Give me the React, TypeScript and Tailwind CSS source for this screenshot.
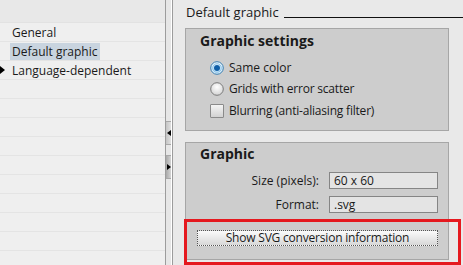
import React from "react";

const font = { fontFamily: '"Open Sans", "Noto Sans", sans-serif' };

function Radio({ checked }: { checked?: boolean }) {
  return (
    <svg width="14" height="14" viewBox="0 0 14 14" className="shrink-0">
      <defs>
        <radialGradient id={checked ? "rg1" : "rg0"} cx="50%" cy="35%" r="60%">
          <stop offset="0%" stopColor="#ffffff" />
          <stop offset="100%" stopColor={checked ? "#cfe6f5" : "#d6d6d6"} />
        </radialGradient>
      </defs>
      <circle cx="7" cy="7" r="6.3" fill={`url(#${checked ? "rg1" : "rg0"})`} stroke={checked ? "#3c7fb1" : "#7a7a7a"} strokeWidth="1" />
      {checked && <circle cx="7" cy="7" r="3" fill="#0f5fa8" />}
      {checked && <circle cx="7" cy="7" r="4.2" fill="none" stroke="#5fb0e6" strokeWidth="0.8" />}
    </svg>
  );
}

function Checkbox() {
  return (
    <div className="w-[14px] h-[14px] shrink-0 border border-[#8a8a8a] rounded-[1px] bg-gradient-to-b from-[#f4f4f4] to-[#d2d2d2]" />
  );
}

export default function App() {
  const rows = ["General", "Default graphic", "Language-dependent", "", "", "", "", "", "", "", "", "", ""];
  return (
    <div className="relative w-[463px] h-[265px] flex overflow-hidden text-[12px] text-[#1a1a1a]" style={font}>
      {/* Left tree */}
      <div className="w-[165px] shrink-0 bg-[#efefef] flex flex-col">
        <div className="h-[23px] shrink-0 bg-[#e8e8e8] border-b border-[#e2e2e2]" />
        {rows.map((r, i) => (
          <div key={i} className="relative h-[19px] shrink-0 border-b border-[#e4e4e4] flex items-center pl-[10px]">
            {i === 2 && (
              <svg width="5" height="8" viewBox="0 0 5 8" className="absolute left-0 top-[5px]">
                <path d="M0 0 L5 4 L0 8 Z" fill="#000" />
              </svg>
            )}
            {r && (
              <span className={`px-[2px] leading-[17px] ${i === 1 ? "bg-[#c9d4df]" : ""}`}>{r}</span>
            )}
          </div>
        ))}
      </div>

      {/* Splitter */}
      <div className="w-[8px] shrink-0 flex border-l border-[#9c9c9c] border-r border-[#9c9c9c] bg-[#e6e6e6]">
        <div className="flex-1 flex flex-col pt-[121px]">
          <div className="h-[24px] border-y border-[#a8a8a8] bg-gradient-to-r from-[#c4c4c4] to-[#e0e0e0] flex items-center justify-center">
            <svg width="4" height="6" viewBox="0 0 4 6"><path d="M4 0 L0 3 L4 6 Z" fill="#000" /></svg>
          </div>
          <div className="h-[10px]" />
          <div className="h-[24px] border-y border-[#a8a8a8] bg-gradient-to-r from-[#a8a8a8] to-[#d4d4d4] flex items-center justify-center">
            <svg width="4" height="6" viewBox="0 0 4 6"><path d="M0 0 L4 3 L0 6 Z" fill="#000" /></svg>
          </div>
        </div>
        <div className="w-[1px] bg-white" />
      </div>

      {/* Right panel */}
      <div className="flex-1 bg-[#e9e9e9] flex flex-col pl-[12px]">
        <div className="h-[28px] flex items-start pt-[2px]">
          <span className="text-[13px] pl-[1px] leading-[20px]">Default graphic</span>
          <div className="flex-1 ml-[5px] mt-[15px] h-[1px] bg-[#111]" />
        </div>

        <div className="w-[264px] h-[103px] border border-[#a6a6a6] bg-[#cdcdcd] flex flex-col pl-[14px]">
          <div className="text-[14px] font-bold leading-[18px] mt-[3px]">Graphic settings</div>
          <div className="flex items-center gap-[5px] mt-[11px] h-[14px] pl-[10px]">
            <Radio checked />
            <span>Same color</span>
          </div>
          <div className="flex items-center gap-[5px] mt-[7px] h-[14px] pl-[10px] tracking-[-0.2px]">
            <Radio />
            <span>Grids with error scatter</span>
          </div>
          <div className="flex items-center gap-[5px] mt-[8px] h-[14px] pl-[10px] tracking-[-0.2px]">
            <Checkbox />
            <span>Blurring (anti-aliasing filter)</span>
          </div>
        </div>

        <div className="w-[264px] h-[118px] mt-[11px] border border-[#a6a6a6] bg-[#cdcdcd] flex flex-col">
          <div className="text-[14px] font-bold leading-[18px] mt-[2px] pl-[14px]">Graphic</div>
          <div className="flex items-center mt-[9px] h-[17px]">
            <span className="w-[133px] text-right">Size (pixels):</span>
            <div className="ml-[10px] w-[109px] h-[17px] border border-[#858585] bg-[#e4e4e4] flex items-center pl-[4px]">60 x 60</div>
          </div>
          <div className="flex items-center mt-[7px] h-[17px]">
            <span className="w-[133px] text-right">Format:</span>
            <div className="ml-[10px] w-[109px] h-[17px] border border-[#858585] bg-[#e4e4e4] flex items-center pl-[4px]">.svg</div>
          </div>
          <div className="mt-[17px] ml-[11px] w-[241px] h-[16px] border border-dotted border-[#555] bg-gradient-to-b from-[#fbfbfb] to-[#d8d8d8] flex items-center justify-center leading-none tracking-[-0.2px]">
            Show SVG conversion information
          </div>
        </div>
      </div>

      {/* Red annotation */}
      <div className="absolute left-[184px] top-[219px] w-[277px] h-[46px] border-[3px] border-[#e5191f]" />
    </div>
  );
}
